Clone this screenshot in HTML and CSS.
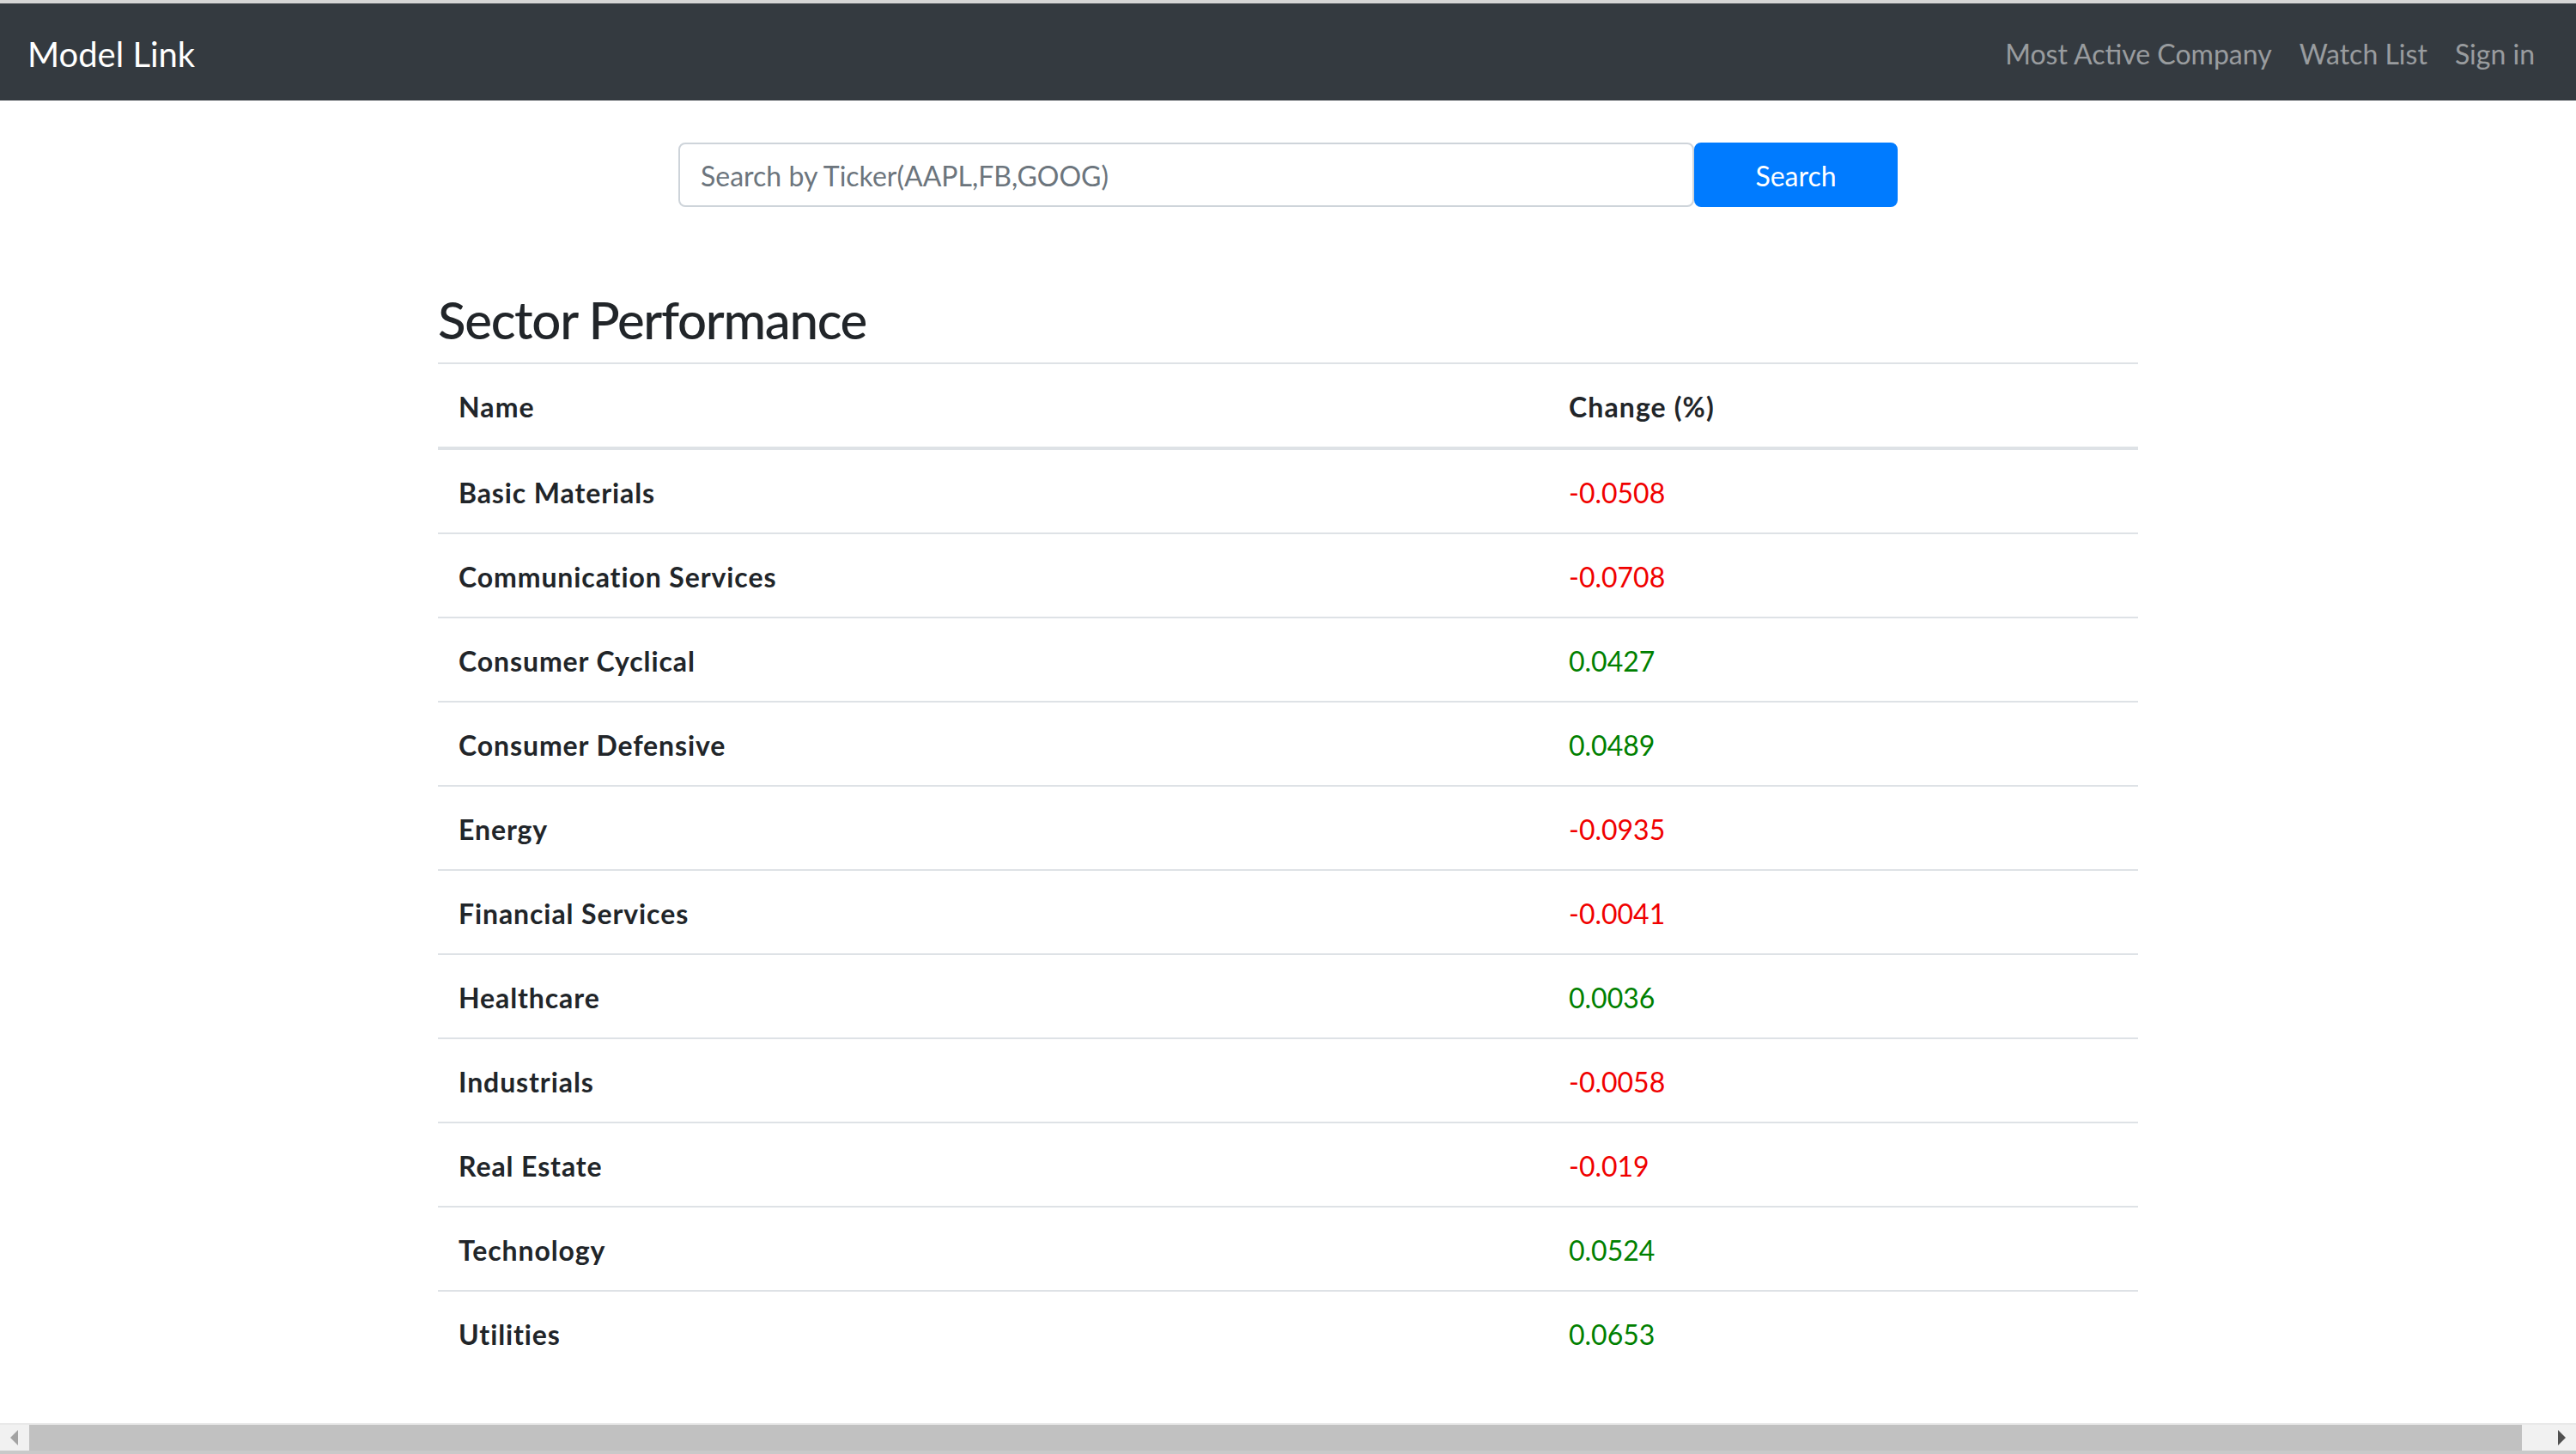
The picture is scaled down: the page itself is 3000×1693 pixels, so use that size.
FILE: index.html
```html
<!DOCTYPE html>
<html lang="en">
<head>
<meta charset="utf-8">
<title>Model Link</title>
<link rel="stylesheet" href="styles.css">
</head>
<body>
<div class="page">
  <div class="topstrip"></div>
  <nav class="navbar">
    <a class="brand" href="#">Model Link</a>
    <ul class="nav">
      <li><a class="nav-link" href="#">Most Active Company</a></li>
      <li><a class="nav-link" href="#">Watch List</a></li>
      <li><a class="nav-link" href="#">Sign in</a></li>
    </ul>
  </nav>
  <main class="main">
    <form class="search">
      <input class="search-input" type="text" placeholder="Search by Ticker(AAPL,FB,GOOG)">
      <button class="search-btn" type="button">Search</button>
    </form>
    <section class="sector">
      <h2 class="sector-title">Sector Performance</h2>
      <table class="table">
        <thead>
          <tr><th class="col-name">Name</th><th>Change (%)</th></tr>
        </thead>
        <tbody>
          <tr><th>Basic Materials</th><td class="neg">-0.0508</td></tr>
          <tr><th>Communication Services</th><td class="neg">-0.0708</td></tr>
          <tr><th>Consumer Cyclical</th><td class="pos">0.0427</td></tr>
          <tr><th>Consumer Defensive</th><td class="pos">0.0489</td></tr>
          <tr><th>Energy</th><td class="neg">-0.0935</td></tr>
          <tr><th>Financial Services</th><td class="neg">-0.0041</td></tr>
          <tr><th>Healthcare</th><td class="pos">0.0036</td></tr>
          <tr><th>Industrials</th><td class="neg">-0.0058</td></tr>
          <tr><th>Real Estate</th><td class="neg">-0.019</td></tr>
          <tr><th>Technology</th><td class="pos">0.0524</td></tr>
          <tr><th>Utilities</th><td class="pos">0.0653</td></tr>
        </tbody>
      </table>
    </section>
  </main>
  <div class="hscroll">
    <div class="hs-btn hs-left"><svg width="10" height="18" viewBox="0 0 10 18"><polygon points="9,0 9,18 0,9" fill="#a3a3a3"/></svg></div>
    <div class="hs-thumb"></div>
    <div class="hs-track"></div>
    <div class="hs-btn hs-right"><svg width="10" height="18" viewBox="0 0 10 18"><polygon points="1,0 1,18 10,9" fill="#505050"/></svg></div>
  </div>
</div>
</body>
</html>
```
FILE: styles.css
```css
html, body {
  margin: 0;
  padding: 0;
  height: 100%;
  overflow: hidden;
}
body {
  font-family: Lato, "Open Sans", sans-serif;
  font-size: 32px;
  line-height: 48px;
  color: #212529;
  background: #fff;
}
.page {
  display: flex;
  flex-direction: column;
  height: 1693px;
}
.topstrip {
  height: 4px;
  background: #d6d6d6;
  flex: none;
}
.navbar {
  flex: none;
  height: 113px;
  box-sizing: border-box;
  background: #343a40;
  display: flex;
  align-items: center;
  justify-content: space-between;
  padding: 4px 32px 0 32px;
}
.brand {
  color: #fff;
  text-decoration: none;
  font-size: 40px;
  line-height: 60px;
}
.nav {
  list-style: none;
  margin: 0;
  padding: 0;
  display: flex;
}
.nav-link {
  display: block;
  padding: 0 16px;
  color: rgba(255, 255, 255, 0.5);
  text-decoration: none;
  font-size: 32px;
  line-height: 48px;
}
.main {
  flex: 1;
  display: flex;
  flex-direction: column;
  align-items: center;
}
.search {
  margin: 49px 0 0 0;
  display: flex;
}
.search-input {
  width: 1183px;
  height: 75px;
  box-sizing: border-box;
  border: 2px solid #ced4da;
  border-radius: 8px;
  padding: 2px 24px 0 24px;
  font-family: inherit;
  font-size: 32px;
  color: #495057;
  outline: none;
}
.search-input::placeholder {
  color: #6c757d;
}
.search-btn {
  width: 237px;
  height: 75px;
  box-sizing: border-box;
  border: 2px solid #007bff;
  border-radius: 8px;
  background: #007bff;
  color: #fff;
  font-family: inherit;
  font-size: 32px;
  padding: 2px 0 0 0;
}
.sector {
  width: 1980px;
  margin-top: 88px;
}
.sector-title {
  margin: 0 0 16px 0;
  padding-top: 10px;
  font-size: 60px;
  font-weight: 500;
  letter-spacing: -1.3px;
  line-height: 67px;
}
.table {
  width: 1980px;
  border-collapse: collapse;
}
.table th,
.table td {
  padding: 26px 24px 22px 24px;
  text-align: left;
  border-top: 2px solid #dee2e6;
  vertical-align: top;
  line-height: 48px;
}
.table th {
  font-weight: 700;
  letter-spacing: 0.9px;
}
.table thead th {
  vertical-align: bottom;
  border-bottom: 4px solid #dee2e6;
  letter-spacing: 1.1px;
}
.col-name {
  width: 1245px;
}
.neg { color: #f00000; }
.pos { color: #008000; }
.hscroll {
  flex: none;
  display: flex;
  height: 36px;
  box-sizing: border-box;
  background: #f1f1f1;
  border-top: 2px solid #e9e9e9;
  border-bottom: 4px solid #c9c9c9;
}
.hs-btn {
  width: 34px;
  flex: none;
  display: flex;
  align-items: center;
  justify-content: center;
}
.hs-thumb {
  width: 2903px;
  flex: none;
  background: #c1c1c1;
}
.hs-track {
  flex: 1;
}
```
